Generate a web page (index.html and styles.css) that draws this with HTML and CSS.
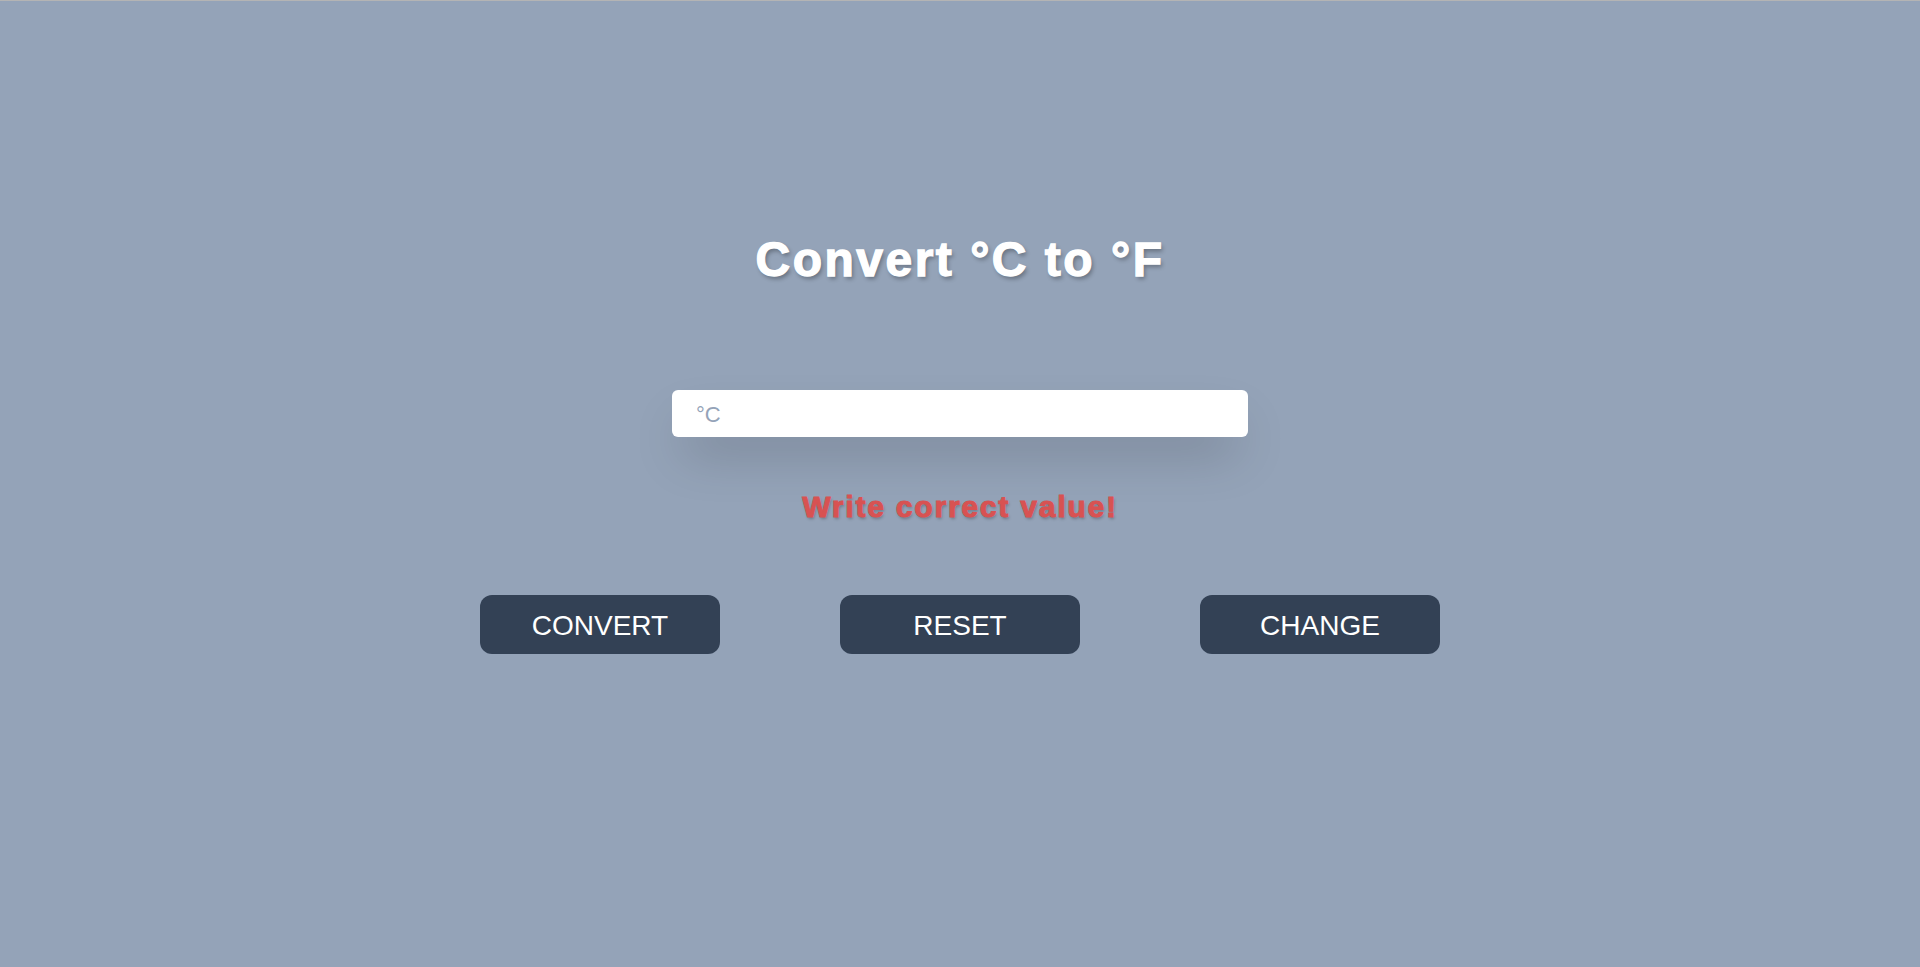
FILE: index.html
```html
<!DOCTYPE html>
<html lang="en">
<head>
<meta charset="utf-8">
<title>Convert °C to °F</title>
<link rel="stylesheet" href="styles.css">
</head>
<body>
<main class="app">
  <h1 class="title">Convert °C to °F</h1>
  <input class="temp-input" type="text" placeholder="°C">
  <p class="error">Write correct value!</p>
  <div class="buttons">
    <button class="btn">CONVERT</button>
    <button class="btn">RESET</button>
    <button class="btn">CHANGE</button>
  </div>
</main>
</body>
</html>
```
FILE: styles.css
```css
html, body {
  margin: 0;
  padding: 0;
  height: 100%;
}
body {
  background: #94a3b8;
  border-top: 1px solid #b4b4b4;
  box-sizing: border-box;
  font-family: "Liberation Sans", Arial, sans-serif;
}
.app {
  display: flex;
  flex-direction: column;
  align-items: center;
  padding-top: 230px;
}
.title {
  margin: 0;
  font-size: 48px;
  line-height: 58px;
  font-weight: 700;
  color: #fff;
  letter-spacing: 2.5px;
  -webkit-text-stroke: 1.3px #fff;
  text-shadow: 2px 3px 4px rgba(0, 0, 0, 0.3);
}
.temp-input {
  margin-top: 101px;
  width: 576px;
  height: 47px;
  box-sizing: border-box;
  border: none;
  border-radius: 6px;
  padding: 2px 24px 0;
  font-family: "Liberation Sans", Arial, sans-serif;
  font-size: 22px;
  color: #333;
  background: #fff;
  outline: none;
  box-shadow: 0 25px 50px -12px rgba(0, 0, 0, 0.25);
}
.temp-input::placeholder {
  color: #94a3b8;
}
.error {
  margin: 50px 0 0;
  font-size: 30px;
  line-height: 40px;
  font-weight: 700;
  color: #d85252;
  letter-spacing: 1.8px;
  -webkit-text-stroke: 1px #d85252;
  text-shadow: 1px 2px 3px rgba(0, 0, 0, 0.25);
}
.buttons {
  display: flex;
  gap: 120px;
  margin-top: 68px;
}
.btn {
  width: 240px;
  height: 59px;
  border: none;
  border-radius: 12px;
  background: #334155;
  color: #fff;
  font-family: "Liberation Sans", Arial, sans-serif;
  font-size: 28px;
  padding: 2px 0 0;
  cursor: pointer;
}
```
